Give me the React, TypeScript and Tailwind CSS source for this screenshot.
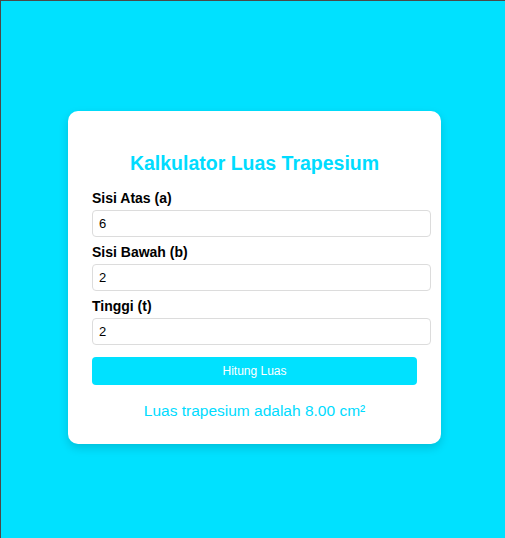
import { useState } from "react";

export default function App() {
  const [a, setA] = useState("6");
  const [b, setB] = useState("2");
  const [t, setT] = useState("2");
  const [result, setResult] = useState("8.00");

  const hitung = () => {
    const luas = ((parseFloat(a) + parseFloat(b)) / 2) * parseFloat(t);
    setResult(isNaN(luas) ? "0.00" : luas.toFixed(2));
  };

  const inputClass =
    "block w-[339px] border border-[#dcdcdc] rounded-[4px] px-[6px] py-[5px] text-[13px] leading-[15px] text-black bg-white outline-none";
  const labelClass = "block text-sm font-bold text-black leading-[17px] mb-[3px]";

  return (
    <div
      className="min-h-[538px] bg-[#00e1ff] border-t border-l border-[#4a4a4a] pt-[110px] pl-[67px]"
      style={{ fontFamily: '"Liberation Sans", Arial, sans-serif' }}
    >
      {/* Card */}
      <div className="w-[373px] bg-white rounded-[10px] shadow-[0_4px_10px_rgba(0,0,0,0.15)] px-6 pt-[40px] pb-[23px]">
        <h2 className="text-[19.5px] leading-6 font-bold text-[#00dcff] text-center mb-[15px]">
          Kalkulator Luas Trapesium
        </h2>

        <label className={labelClass}>Sisi Atas (a)</label>
        <input className={inputClass} value={a} onChange={(e) => setA(e.target.value)} />

        <label className={labelClass + " mt-[7px]"}>Sisi Bawah (b)</label>
        <input className={inputClass} value={b} onChange={(e) => setB(e.target.value)} />

        <label className={labelClass + " mt-[7px]"}>Tinggi (t)</label>
        <input className={inputClass} value={t} onChange={(e) => setT(e.target.value)} />

        <button
          onClick={hitung}
          className="mt-3 w-full h-[28px] bg-[#00e1ff] text-white text-[12px] rounded-[4px]"
        >
          Hitung Luas
        </button>

        <p className="mt-[16px] text-center text-[15.5px] leading-[20px] text-[#00dcff]">
          Luas trapesium adalah {result} cm²
        </p>
      </div>
    </div>
  );
}
